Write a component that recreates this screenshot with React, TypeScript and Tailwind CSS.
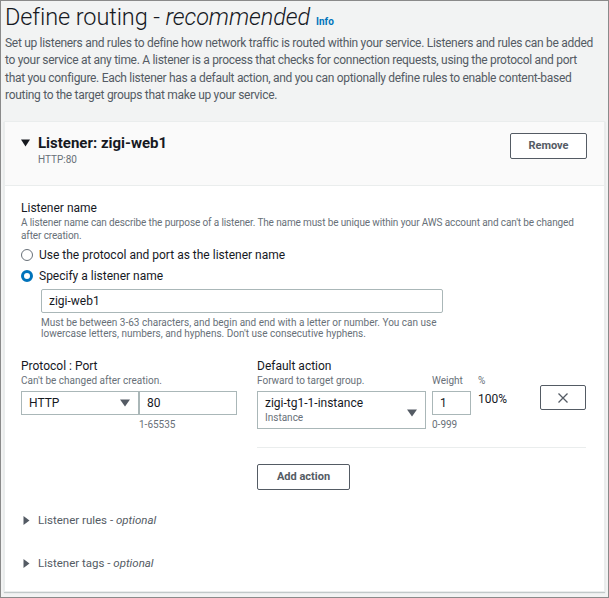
import React from "react";

const Tri = ({ dir }: { dir: "down" | "right" }) =>
  dir === "down" ? (
    <svg width="9" height="8" viewBox="0 0 9 8"><path d="M0 0.5 L9 0.5 L4.5 7.5 Z" fill="#16191f" /></svg>
  ) : (
    <svg width="7" height="9" viewBox="0 0 7 9"><path d="M0.5 0 L6.5 4.5 L0.5 9 Z" fill="#545b64" /></svg>
  );

const SelTri = () => (
  <svg width="10" height="8" viewBox="0 0 10 8"><path d="M0 0.5 L10 0.5 L5 7.5 Z" fill="#545b64" /></svg>
);

export default function App() {
  return (
    <div
      className="w-[609px] h-[598px] border border-[#8a8a8a] bg-[#f2f3f3] text-[#16191f] overflow-hidden px-[3px]"
      style={{ fontFamily: "Roboto, 'Open Sans', sans-serif" }}
    >
      <div className="pl-[1px] pt-[3px]">
        <div className="flex items-baseline h-[27px]">
          <span className="text-[23.5px] font-light leading-[27px] tracking-[-0.1px]">
            Define routing - <i>recommended</i>
          </span>
          <span className="ml-[6px] text-[10px] font-bold text-[#0073bb]">Info</span>
        </div>
        <p className="mt-[4px] text-[12px] leading-[17.3px] text-[#545b64] tracking-[-0.3px] whitespace-nowrap">
          Set up listeners and rules to define how network traffic is routed within your service. Listeners and rules can be added<br />
          to your service at any time. A listener is a process that checks for connection requests, using the protocol and port<br />
          that you configure. Each listener has a default action, and you can optionally define rules to enable content-based<br />
          routing to the target groups that make up your service.
        </p>
      </div>

      <div className="mt-[17px] bg-white border border-[#eaeded] shadow-[0_1px_1px_rgba(0,28,36,0.2)] h-[471px]">
        <div className="bg-[#fafafa] border-b border-[#eaeded] h-[64px] flex items-start justify-between pl-[16px] pr-[17px] pt-[10px]">
          <div>
            <div className="flex items-center h-[22px]">
              <Tri dir="down" />
              <span className="ml-[8px] text-[15px] font-bold leading-[22px]">Listener: zigi-web1</span>
            </div>
            <div className="ml-[17px] text-[10px] text-[#687078] leading-[12px]">HTTP:80</div>
          </div>
          <button className="mt-[1px] w-[77px] h-[26px] border border-[#545b64] rounded-[2px] text-[11px] font-bold text-[#545b64] bg-white">
            Remove
          </button>
        </div>

        <div className="pl-[16px] pr-[17px] pt-[14px]">
          <div className="text-[12px] leading-[16px]">Listener name</div>
          <div className="text-[10px] leading-[12.5px] text-[#687078] mt-[1px] tracking-[-0.12px] whitespace-nowrap">
            A listener name can describe the purpose of a listener. The name must be unique within your AWS account and can't be changed<br />
            after creation.
          </div>
          <div className="mt-[3px] flex items-center h-[20px]">
            <span className="w-[12px] h-[12px] rounded-full border border-[#687078] bg-white" />
            <span className="ml-[6px] text-[12px]">Use the protocol and port as the listener name</span>
          </div>
          <div className="mt-[1px] flex items-center h-[20px]">
            <span className="w-[12px] h-[12px] rounded-full border-[3.5px] border-[#0073bb] bg-white" />
            <span className="ml-[6px] text-[12px]">Specify a listener name</span>
          </div>
          <div className="ml-[20px] mt-[3px] w-[402px] h-[24px] border border-[#aab7b8] rounded-[2px] flex items-center pl-[7px] text-[12px]">
            zigi-web1
          </div>
          <div className="ml-[20px] mt-[4px] text-[10px] leading-[11px] text-[#687078] w-[400px]">
            Must be between 3-63 characters, and begin and end with a letter or number. You can use lowercase letters, numbers, and hyphens. Don't use consecutive hyphens.
          </div>

          <div className="mt-[19px] flex">
            <div className="w-[236px]">
              <div className="text-[12px] leading-[16px]">Protocol : Port</div>
              <div className="text-[10px] leading-[14px] text-[#687078]">Can't be changed after creation.</div>
              <div className="mt-[3px] flex">
                <div className="w-[118px] h-[24px] border border-[#aab7b8] flex items-center justify-between pl-[7px] pr-[8px] text-[12px]">
                  HTTP <SelTri />
                </div>
                <div className="w-[98px] h-[24px] border border-[#aab7b8] flex items-center pl-[7px] text-[12px]">80</div>
              </div>
              <div className="ml-[118px] mt-[3px] text-[10px] text-[#687078] leading-[14px]">1-65535</div>
            </div>
            <div className="flex-1">
              <div className="text-[12px] leading-[16px]">Default action</div>
              <div className="flex">
                <div className="w-[175px]">
                  <div className="text-[10px] leading-[14px] text-[#687078]">Forward to target group.</div>
                  <div className="mt-[3px] w-[169px] h-[38px] border border-[#aab7b8] flex items-center justify-between pl-[7px] pr-[8px]">
                    <div>
                      <div className="text-[12px] leading-[15px]">zigi-tg1-1-instance</div>
                      <div className="text-[10px] leading-[13px] text-[#687078]">Instance</div>
                    </div>
                    <div className="mt-[6px]"><SelTri /></div>
                  </div>
                </div>
                <div className="w-[46px]">
                  <div className="text-[10px] leading-[14px] text-[#687078]">Weight</div>
                  <div className="mt-[3px] w-[39px] h-[24px] border border-[#aab7b8] flex items-center pl-[7px] text-[12px]">1</div>
                  <div className="mt-[3px] text-[10px] text-[#687078] leading-[14px]">0-999</div>
                </div>
                <div className="w-[62px]">
                  <div className="text-[10px] leading-[14px] text-[#687078]">%</div>
                  <div className="mt-[3px] text-[12px] leading-[16px]">100%</div>
                </div>
                <div className="pt-[11px]">
                  <div className="w-[46px] h-[25px] border border-[#545b64] rounded-[2px] flex items-center justify-center">
                    <svg width="12" height="12" viewBox="0 0 12 12"><path d="M1.5 1.5 L10.5 10.5 M10.5 1.5 L1.5 10.5" stroke="#545b64" strokeWidth="1.3" /></svg>
                  </div>
                </div>
              </div>
              <div className="mt-[15px] border-t border-[#eaeded] w-[329px]" />
              <button className="mt-[16px] w-[93px] h-[26px] border border-[#545b64] rounded-[2px] text-[11px] font-bold text-[#545b64] bg-white">
                Add action
              </button>
            </div>
          </div>

          <div className="mt-[21px] flex items-center h-[18px] pl-[2px]">
            <Tri dir="right" />
            <span className="ml-[8px] text-[11.5px] text-[#545b64]">Listener rules - <i>optional</i></span>
          </div>
          <div className="mt-[25px] flex items-center h-[18px] pl-[2px]">
            <Tri dir="right" />
            <span className="ml-[8px] text-[11.5px] text-[#545b64]">Listener tags - <i>optional</i></span>
          </div>
        </div>
      </div>
    </div>
  );
}
